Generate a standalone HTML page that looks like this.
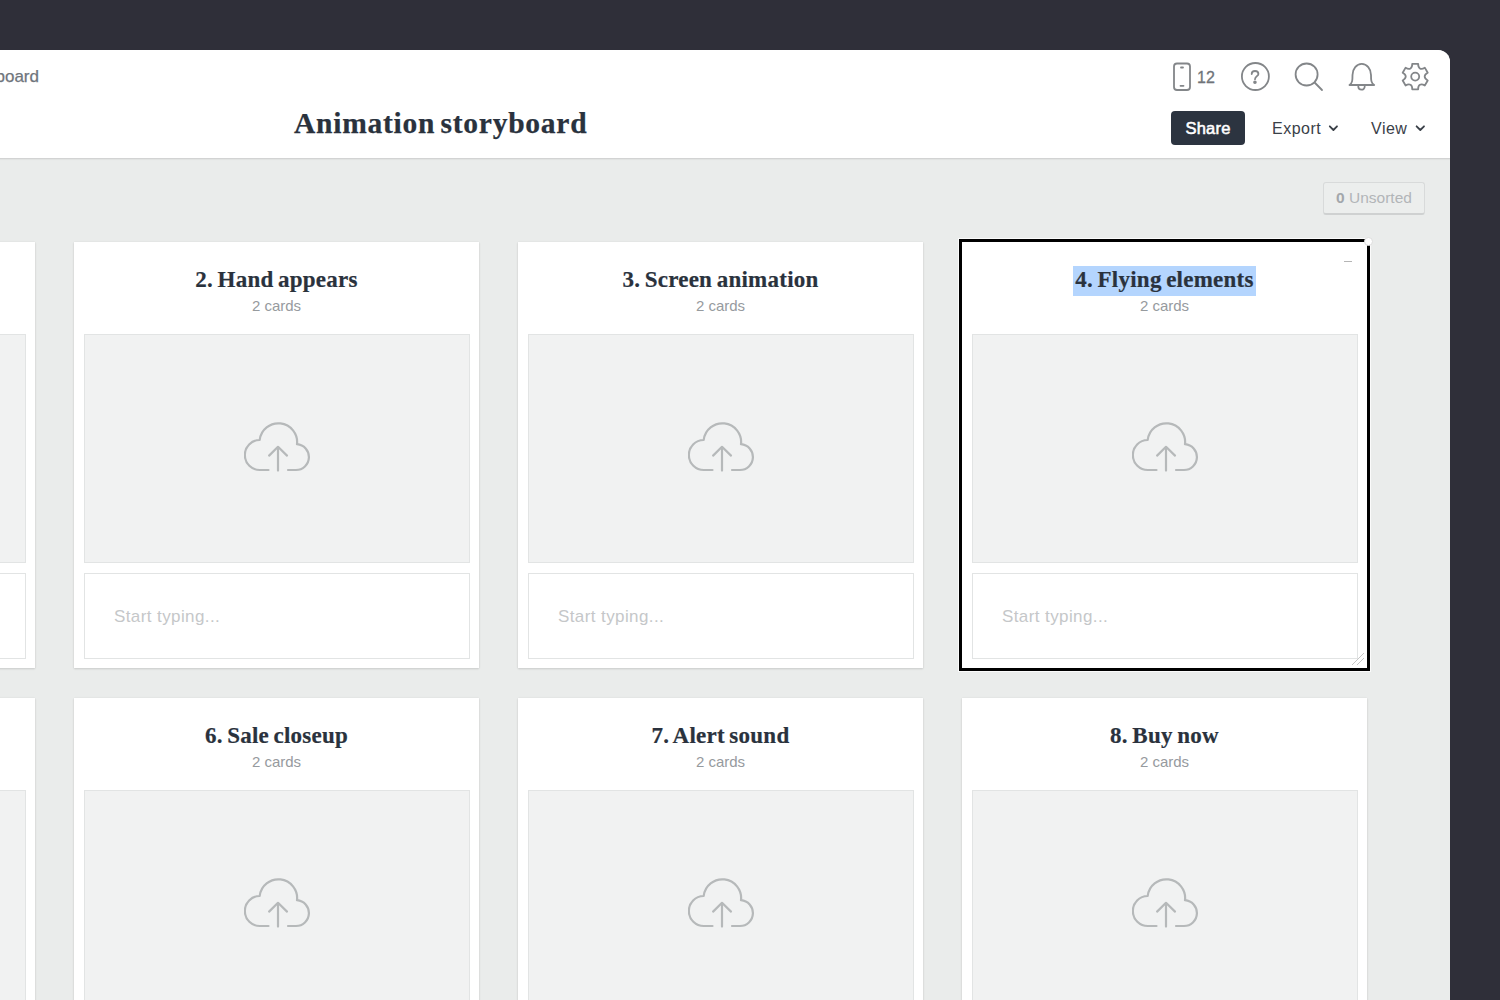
<!DOCTYPE html>
<html><head><meta charset="utf-8">
<style>
*{margin:0;padding:0;box-sizing:border-box}
html,body{width:1500px;height:1000px;overflow:hidden;background:#2f2f39;font-family:"Liberation Sans",sans-serif;position:relative}
#win{position:absolute;left:0;top:50px;width:1450px;height:960px;background:#eaeceb;border-top-right-radius:12px;overflow:hidden}
#hdr{position:absolute;left:0;top:0;width:100%;height:109px;background:#fff;border-bottom:1px solid #d2d3d3;box-shadow:0 1px 1px rgba(0,0,0,.035)}
.abs{position:absolute;white-space:nowrap}
.card{position:absolute;width:405px;height:426px;background:#fff;box-shadow:0 1px 2px rgba(0,0,0,.13),0 0 2px rgba(0,0,0,.06)}
.card .t{position:absolute;left:0;width:100%;top:24px;text-align:center;font-family:"Liberation Serif",serif;font-weight:bold;font-size:23px;line-height:28px;letter-spacing:0.25px;word-spacing:-1.5px;color:#2a323d;-webkit-text-stroke:0.2px #2a323d;white-space:nowrap}
.hl{background:#b4d5fe;padding:1px 2px 4px 2px}
.card .s{position:absolute;left:0;width:100%;top:55px;text-align:center;font-size:15px;line-height:18px;color:#969a9e}
.card .img{position:absolute;left:10px;top:92px;width:386px;height:229px;background:#f1f2f2;border:1px solid #e2e4e4}
.card .txt{position:absolute;left:10px;top:331px;width:386px;height:86px;background:#fff;border:1px solid #e2e4e4}
.card .txt span{position:absolute;left:29px;top:33px;font-size:17px;line-height:20px;color:#c5c7c9;letter-spacing:0.4px}
.cloud{position:absolute;left:159px;top:86px}
.ico{position:absolute}
.btn{position:absolute;font-size:16px;line-height:20px;color:#3a4048}
</style></head><body>
<div id="win">
  <div id="hdr">
    <div class="abs" style="right:1411px;top:16.5px;font-size:17px;line-height:20px;color:#6f757c;-webkit-text-stroke:0.25px #6f757c">Storyboard</div>
    <div class="abs" style="left:294px;top:55px;font-family:'Liberation Serif',serif;font-weight:bold;font-size:29.5px;line-height:36px;color:#2a323d;letter-spacing:0.74px;word-spacing:-2.6px;-webkit-text-stroke:0.25px #2a323d">Animation storyboard</div>
  </div>
</div>
<!-- header icons (page coords) -->
<svg class="ico" style="left:1160px;top:55px" width="280" height="45" viewBox="1160 55 280 45">
  <g fill="none" stroke="#838689" stroke-width="1.8" stroke-linecap="round" stroke-linejoin="round">
    <rect x="1174" y="63.5" width="16" height="26.5" rx="3"/>
    <path d="M1181 67.5h2M1180.5 85.8h3"/>
    <circle cx="1255.4" cy="76.5" r="13.5"/>
    <path d="M1251.7 74C1251.7 72 1253.1 71 1255 71C1257 71 1258.4 72.2 1258.4 73.9C1258.4 76 1255.2 76.4 1255 79.2"/>
    <circle cx="1254.95" cy="82.3" r="0.9" fill="#838689"/>
    <circle cx="1306.6" cy="74.5" r="11"/>
    <path d="M1314.6 82.5L1322 90"/>
    <path d="M1349.5 85C1352.5 83 1352.5 80 1352.5 75A9.2 11 0 0 1 1371 75C1371 80 1371 83 1374.2 85Z"/>
    <path d="M1358.3 86.5A3.2 3.2 0 0 0 1364.7 86.5"/>
    <circle cx="1415.2" cy="76.6" r="4"/>
    <path d="M1412.25 63.84 L1418.15 63.84 C1418.00 68.47 1420.84 70.11 1424.78 67.67 L1427.73 72.77 C1423.64 74.96 1423.64 78.24 1427.73 80.43 L1424.78 85.53 C1420.84 83.09 1418.00 84.73 1418.15 89.36 L1412.25 89.36 C1412.40 84.73 1409.56 83.09 1405.62 85.53 L1402.67 80.43 C1406.76 78.24 1406.76 74.96 1402.67 72.77 L1405.62 67.67 C1409.56 70.11 1412.40 68.47 1412.25 63.84Z"/>
  </g>
</svg>
<div class="abs" style="left:1197px;top:68px;font-size:16px;line-height:20px;color:#6f7479;-webkit-text-stroke:0.3px #6f7479">12</div>
<div class="abs" style="left:1171px;top:111px;width:74px;height:34px;background:#2c3440;border-radius:4px;color:#fff;font-weight:normal;-webkit-text-stroke:0.55px #fff;font-size:16.5px;line-height:34px;text-align:center;letter-spacing:0.2px">Share</div>
<div class="btn" style="left:1272px;top:119px;letter-spacing:0.5px">Export</div>
<div class="btn" style="left:1371px;top:119px;letter-spacing:0.5px">View</div>
<svg class="ico" style="left:1320px;top:120px" width="120" height="15" viewBox="1320 120 120 15"><g fill="none" stroke="#3a4048" stroke-width="1.8" stroke-linecap="round" stroke-linejoin="round"><path d="M1329.8 126.3L1333.4 130L1337 126.3M1416.6 126.3L1420.3 130L1424 126.3"/></g></svg>
<div class="abs" style="left:1323px;top:182px;width:102px;height:33px;border:1px solid #d8dada;border-bottom:2px solid #cfd1d1;border-radius:3px;background:#eceeed;font-size:15.5px;line-height:30px;color:#b2b5b8;text-align:center;letter-spacing:0px"><b style="color:#a3a7ab">0</b> Unsorted</div>
<div id="cards">
<div class="card" style="left:-370px;top:242px"><div class="t">1. Intro</div><div class="s">2 cards</div><div class="img"><svg class="cloud" width="70" height="56" viewBox="0 0 70 56"><g fill="none" stroke="#b6b9ba" stroke-width="2.2" stroke-linecap="round" stroke-linejoin="round"><path d="M24.5 49H16A15 15 0 0 1 15.7 19A18.56 18.56 0 0 1 53 23.2A12.92 12.92 0 0 1 51.9 49H44"/><path d="M34 49.6V26M25.1 34.6L34 25.8L43 34.6"/></g></svg></div><div class="txt"><span>Start typing...</span></div></div>
<div class="card" style="left:74px;top:242px"><div class="t">2. Hand appears</div><div class="s">2 cards</div><div class="img"><svg class="cloud" width="70" height="56" viewBox="0 0 70 56"><g fill="none" stroke="#b6b9ba" stroke-width="2.2" stroke-linecap="round" stroke-linejoin="round"><path d="M24.5 49H16A15 15 0 0 1 15.7 19A18.56 18.56 0 0 1 53 23.2A12.92 12.92 0 0 1 51.9 49H44"/><path d="M34 49.6V26M25.1 34.6L34 25.8L43 34.6"/></g></svg></div><div class="txt"><span>Start typing...</span></div></div>
<div class="card" style="left:518px;top:242px"><div class="t">3. Screen animation</div><div class="s">2 cards</div><div class="img"><svg class="cloud" width="70" height="56" viewBox="0 0 70 56"><g fill="none" stroke="#b6b9ba" stroke-width="2.2" stroke-linecap="round" stroke-linejoin="round"><path d="M24.5 49H16A15 15 0 0 1 15.7 19A18.56 18.56 0 0 1 53 23.2A12.92 12.92 0 0 1 51.9 49H44"/><path d="M34 49.6V26M25.1 34.6L34 25.8L43 34.6"/></g></svg></div><div class="txt"><span>Start typing...</span></div></div>
<div class="card" style="left:962px;top:242px"><div class="t"><span class="hl">4. Flying elements</span></div><div class="s">2 cards</div><div class="img"><svg class="cloud" width="70" height="56" viewBox="0 0 70 56"><g fill="none" stroke="#b6b9ba" stroke-width="2.2" stroke-linecap="round" stroke-linejoin="round"><path d="M24.5 49H16A15 15 0 0 1 15.7 19A18.56 18.56 0 0 1 53 23.2A12.92 12.92 0 0 1 51.9 49H44"/><path d="M34 49.6V26M25.1 34.6L34 25.8L43 34.6"/></g></svg></div><div class="txt"><span>Start typing...</span></div></div>
<div class="card" style="left:-370px;top:698px"><div class="t">5. Sale</div><div class="s">2 cards</div><div class="img"><svg class="cloud" width="70" height="56" viewBox="0 0 70 56"><g fill="none" stroke="#b6b9ba" stroke-width="2.2" stroke-linecap="round" stroke-linejoin="round"><path d="M24.5 49H16A15 15 0 0 1 15.7 19A18.56 18.56 0 0 1 53 23.2A12.92 12.92 0 0 1 51.9 49H44"/><path d="M34 49.6V26M25.1 34.6L34 25.8L43 34.6"/></g></svg></div><div class="txt"><span>Start typing...</span></div></div>
<div class="card" style="left:74px;top:698px"><div class="t">6. Sale closeup</div><div class="s">2 cards</div><div class="img"><svg class="cloud" width="70" height="56" viewBox="0 0 70 56"><g fill="none" stroke="#b6b9ba" stroke-width="2.2" stroke-linecap="round" stroke-linejoin="round"><path d="M24.5 49H16A15 15 0 0 1 15.7 19A18.56 18.56 0 0 1 53 23.2A12.92 12.92 0 0 1 51.9 49H44"/><path d="M34 49.6V26M25.1 34.6L34 25.8L43 34.6"/></g></svg></div><div class="txt"><span>Start typing...</span></div></div>
<div class="card" style="left:518px;top:698px"><div class="t">7. Alert sound</div><div class="s">2 cards</div><div class="img"><svg class="cloud" width="70" height="56" viewBox="0 0 70 56"><g fill="none" stroke="#b6b9ba" stroke-width="2.2" stroke-linecap="round" stroke-linejoin="round"><path d="M24.5 49H16A15 15 0 0 1 15.7 19A18.56 18.56 0 0 1 53 23.2A12.92 12.92 0 0 1 51.9 49H44"/><path d="M34 49.6V26M25.1 34.6L34 25.8L43 34.6"/></g></svg></div><div class="txt"><span>Start typing...</span></div></div>
<div class="card" style="left:962px;top:698px"><div class="t">8. Buy now</div><div class="s">2 cards</div><div class="img"><svg class="cloud" width="70" height="56" viewBox="0 0 70 56"><g fill="none" stroke="#b6b9ba" stroke-width="2.2" stroke-linecap="round" stroke-linejoin="round"><path d="M24.5 49H16A15 15 0 0 1 15.7 19A18.56 18.56 0 0 1 53 23.2A12.92 12.92 0 0 1 51.9 49H44"/><path d="M34 49.6V26M25.1 34.6L34 25.8L43 34.6"/></g></svg></div><div class="txt"><span>Start typing...</span></div></div>
</div>
<div class="abs" style="left:959px;top:239px;width:411px;height:432px;border:3px solid #000;box-shadow:0 0 0 1px rgba(255,255,255,.8)"></div>
<div class="abs" style="left:1364px;top:237px;width:9px;height:9px;border-radius:50%;background:#fff;border:1px solid #ddd"></div>
<div class="abs" style="left:1344px;top:261px;width:8px;height:1px;background:#b5b5b5"></div>
<svg class="ico" style="left:1350px;top:650px" width="16" height="16" viewBox="1350 650 16 16"><g stroke="#c5c5c5" stroke-width="1"><path d="M1352 665L1364 653M1357 665L1364 658"/></g></svg>
</body></html>
